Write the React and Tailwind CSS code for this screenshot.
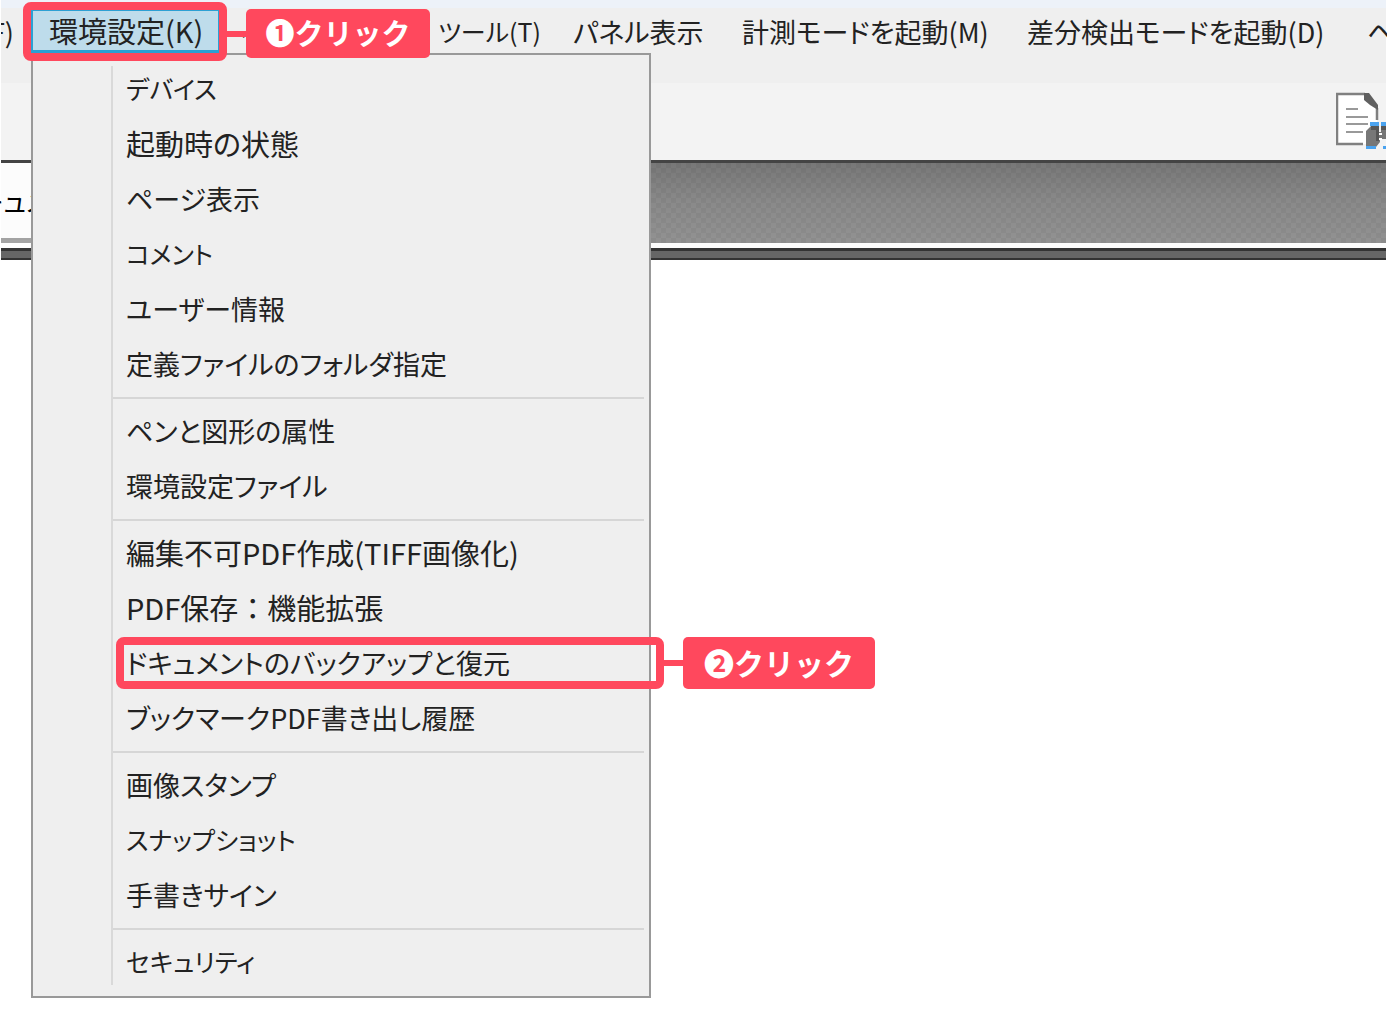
import { Fragment } from 'react';

const groups = [
  [
    { text: 'デバイス', size: 'text-[25px]' },
    { text: '起動時の状態', size: 'text-[29px]' },
    { text: 'ページ表示' },
    { text: 'コメント', size: 'text-[25px]' },
    { text: 'ユーザー情報' },
    { text: '定義ファイルのフォルダ指定' },
  ],
  [{ text: 'ペンと図形の属性' }, { text: '環境設定ファイル' }],
  [
    { text: '編集不可PDF作成(TIFF画像化)', size: 'text-[29px]' },
    { text: 'PDF保存：機能拡張', size: 'text-[29px] [font-feature-settings:normal]' },
    { text: 'ドキュメントのバックアップと復元', marked: true },
    { text: 'ブックマークPDF書き出し履歴' },
  ],
  [{ text: '画像スタンプ' }, { text: 'スナップショット', size: 'text-[25px]' }, { text: '手書きサイン' }],
  [{ text: 'セキュリティ', size: 'text-[25px]' }],
];

function Label({ children, className }) {
  return (
    <div className={`flex shrink-0 items-center font-bold text-white [font-feature-settings:normal] ${className}`}>
      <span className="h-[6px] w-[19px] bg-[#ff485d]" />
      <span className="flex h-full flex-1 items-center justify-center rounded-[5px] bg-[#ff485d] pb-[2px]">
        {children}
      </span>
    </div>
  );
}

function MenuItem({ text, size = 'text-[27px]', marked }) {
  return (
    <li className="relative">
      <button role="menuitem" className={`flex h-[55px] w-full items-center pb-[2px] pl-[15px] text-left whitespace-nowrap ${size}`}>
        {text}
      </button>
      {marked && (
        <div className="pointer-events-none absolute top-px left-[5px] flex items-center">
          <span className="h-[52px] w-[548px] shrink-0 rounded-lg border-8 border-[#ff485d]" />
          <Label className="h-[52px] w-[211px] text-[30px]">❷クリック</Label>
        </div>
      )}
    </li>
  );
}

function SettingsMenu() {
  return (
    <div className="absolute top-[44px] left-0 z-10 w-[620px] border-2 border-[#999] bg-[#efefef] pt-[7px] pb-[6px] pl-[78px]">
      <span className="absolute top-[11px] bottom-[11px] w-[2px] bg-[#d9d9d9]" />
      <ul role="menu">
        {groups.map((items, i) => (
          <Fragment key={i}>
            {i > 0 && (
              <li role="separator" className="flex h-[12px] items-center pr-[5px]">
                <span className="h-[2px] w-full bg-[#d6d6d6]" />
              </li>
            )}
            {items.map(item => <MenuItem key={item.text} {...item} />)}
          </Fragment>
        ))}
      </ul>
    </div>
  );
}

function SearchDocIcon() {
  return (
    <svg width="50" height="60" viewBox="0 0 50 60" fill="none">
      <path d="M1 2H30L41 16V52H1Z" fill="#fff" />
      <path d="M29 2H1V52H27M41 16V28" stroke="#808080" strokeWidth="2.5" />
      <path d="M28 1H33L36 5L42 13V18L34 13L28 8Z" fill="#606060" />
      <path d="M10 17H22M10 25H32M10 32H32M10 40H27" stroke="#999" strokeWidth="2" />
      <path d="M30 39L35 34H43V40H45V34H50V47H44V50L40 55H30Z" fill="#777" />
      <path d="M35 34H43V38H35ZM45 34H50V38H45ZM40 38H43V49H40Z" fill="#565656" />
      <path d="M43 41H46V43H43ZM43 46H46V48H43Z" fill="#fff" />
      <path d="M34 30H43V34H34ZM45 30H50V34H45ZM30 54H40V57H30ZM47 54H50V57H47Z" fill="#4ba3ef" />
    </svg>
  );
}

export default function App() {
  return (
    <div lang="ja" className="min-h-screen overflow-x-clip bg-white px-px font-['Noto_Sans_CJK_JP',sans-serif] text-[27px] leading-none text-[#222] [font-feature-settings:'palt']">
      <div className="h-[8px] bg-[#edf2f9]" />
      <nav className="flex h-[75px] items-start bg-[#efefef] pt-px whitespace-nowrap">
        <button className="flex h-[44px] w-[30px] shrink-0 items-center justify-end overflow-hidden pr-[17px]">(F)</button>
        <div className="relative w-[191px] shrink-0">
          <button className="flex h-[44px] w-[189px] items-center border-2 border-b-[3px] border-[#2ca0d4] bg-[#bedceb] pl-[16px] text-[29px]">
            環境設定(K)
          </button>
          <SettingsMenu />
          <div className="pointer-events-none absolute -top-[7px] -left-[8px] z-20 flex items-center">
            <span className="h-[59px] w-[204px] shrink-0 rounded-lg border-8 border-[#ff485d]" />
            <Label className="mt-1 h-[49px] w-[203px] text-[29px]">❶クリック</Label>
          </div>
        </div>
        <button className="h-[44px] w-[198px] shrink-0 pl-[18px] text-left">ページ(P)</button>
        <button className="h-[44px] w-[135px] shrink-0 pl-[18px] text-left text-[25px]">ツール(T)</button>
        <button className="h-[44px] w-[169px] shrink-0 pl-[18px] text-left">パネル表示</button>
        <button className="h-[44px] w-[285px] shrink-0 pl-[18px] text-left">計測モードを起動(M)</button>
        <button className="h-[44px] w-[340px] shrink-0 pl-[18px] text-left">差分検出モードを起動(D)</button>
        <button className="h-[44px] shrink-0 pl-[18px] text-left">ヘルプ(H)</button>
      </nav>
      <div className="flex h-[77px] justify-end bg-[#f3f3f3] pt-[9px]">
        <button aria-label="文書内を検索" className="h-[60px] w-[50px]">
          <SearchDocIcon />
        </button>
      </div>
      <div className="h-[83px] border-t-3 border-[#444] bg-[#888] bg-[linear-gradient(#0002,#0000_50%,#fff1),repeating-conic-gradient(#848484_0_25%,#8a8a8a_0_50%)] bg-size-[100%_100%,10px_10px]">
        <button className="flex h-[80px] w-[160px] items-center border-b-[5px] border-[#a3a3a3] bg-[#fcfcfc] text-black">
          <span className="-ml-[23px] whitespace-nowrap">キュメント</span>
        </button>
      </div>
      <div className="h-[5px] bg-[#fcfcfc]" />
      <div className="h-[12px] border-t-3 border-b-2 border-[#333] bg-[#666]" />
    </div>
  );
}
